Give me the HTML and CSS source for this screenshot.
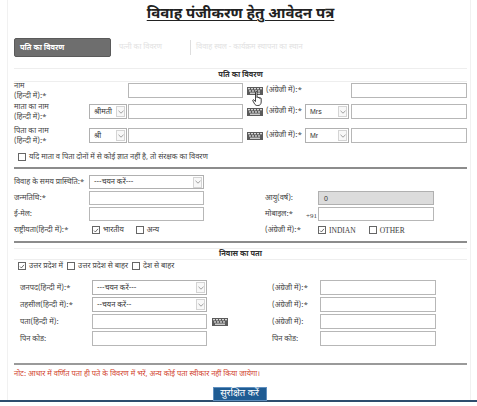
FILE: index.html
```html
<!DOCTYPE html>
<html lang="hi">
<head>
<meta charset="utf-8">
<title>विवाह पंजीकरण हेतु आवेदन पत्र</title>
<link rel="stylesheet" href="styles.css">
</head>
<body>
<div class="frame">
  <h1 class="title"><span>विवाह पंजीकरण हेतु आवेदन पत्र</span></h1>

  <div class="tabs">
    <div class="tab active">पति का विवरण</div>
    <div class="tab faded">पत्नी का विवरण</div>
    <div class="tab faded divider">विवाह स्थल - कार्यक्रम स्थापना का स्थान</div>
  </div>

  <div class="section-head">पति का विवरण</div>

  <div class="person-grid">
    <div class="lbl two">नाम<br>(हिन्दी में):*</div>
    <div class="input c3"></div>
    <div class="kbd-cell"><svg class="kbd" width="16" height="8" viewBox="0 0 16 8"><rect width="16" height="8" fill="#5b5b5b"/><g fill="#d8d8d8"><rect x="1" y="1" width="2" height="1.3"/><rect x="4" y="1" width="2" height="1.3"/><rect x="7" y="1" width="2" height="1.3"/><rect x="10" y="1" width="2" height="1.3"/><rect x="13" y="1" width="2" height="1.3"/><rect x="2" y="3.3" width="2" height="1.3"/><rect x="5" y="3.3" width="2" height="1.3"/><rect x="8" y="3.3" width="2" height="1.3"/><rect x="11" y="3.3" width="2" height="1.3"/><rect x="3" y="5.6" width="10" height="1.3"/></g></svg></div>
    <div class="lbl en">(अंग्रेजी में):*</div>
    <div class="input c7"></div>

    <div class="lbl two">माता का नाम<br>(हिन्दी में):*</div>
    <div class="select c2"><span>श्रीमती</span><i class="arrow"><svg width="6" height="4" viewBox="0 0 6 4"><path d="M.5 .8 3 3.2 5.5 .8" fill="none" stroke="#888" stroke-width=".8"/></svg></i></div>
    <div class="input c3"></div>
    <div class="kbd-cell"><svg class="kbd" width="16" height="8" viewBox="0 0 16 8"><rect width="16" height="8" fill="#5b5b5b"/><g fill="#d8d8d8"><rect x="1" y="1" width="2" height="1.3"/><rect x="4" y="1" width="2" height="1.3"/><rect x="7" y="1" width="2" height="1.3"/><rect x="10" y="1" width="2" height="1.3"/><rect x="13" y="1" width="2" height="1.3"/><rect x="2" y="3.3" width="2" height="1.3"/><rect x="5" y="3.3" width="2" height="1.3"/><rect x="8" y="3.3" width="2" height="1.3"/><rect x="11" y="3.3" width="2" height="1.3"/><rect x="3" y="5.6" width="10" height="1.3"/></g></svg></div>
    <div class="lbl en">(अंग्रेजी में):*</div>
    <div class="select c6 latin"><span>Mrs</span><i class="arrow"><svg width="6" height="4" viewBox="0 0 6 4"><path d="M.5 .8 3 3.2 5.5 .8" fill="none" stroke="#888" stroke-width=".8"/></svg></i></div>
    <div class="input c7"></div>

    <div class="lbl two">पिता का नाम<br>(हिन्दी में):*</div>
    <div class="select c2"><span>श्री</span><i class="arrow"><svg width="6" height="4" viewBox="0 0 6 4"><path d="M.5 .8 3 3.2 5.5 .8" fill="none" stroke="#888" stroke-width=".8"/></svg></i></div>
    <div class="input c3"></div>
    <div class="kbd-cell"><svg class="kbd" width="16" height="8" viewBox="0 0 16 8"><rect width="16" height="8" fill="#5b5b5b"/><g fill="#d8d8d8"><rect x="1" y="1" width="2" height="1.3"/><rect x="4" y="1" width="2" height="1.3"/><rect x="7" y="1" width="2" height="1.3"/><rect x="10" y="1" width="2" height="1.3"/><rect x="13" y="1" width="2" height="1.3"/><rect x="2" y="3.3" width="2" height="1.3"/><rect x="5" y="3.3" width="2" height="1.3"/><rect x="8" y="3.3" width="2" height="1.3"/><rect x="11" y="3.3" width="2" height="1.3"/><rect x="3" y="5.6" width="10" height="1.3"/></g></svg></div>
    <div class="lbl en">(अंग्रेजी में):*</div>
    <div class="select c6 latin"><span>Mr</span><i class="arrow"><svg width="6" height="4" viewBox="0 0 6 4"><path d="M.5 .8 3 3.2 5.5 .8" fill="none" stroke="#888" stroke-width=".8"/></svg></i></div>
    <div class="input c7"></div>

    <svg class="cursor" width="12" height="15" viewBox="0 0 12 15"><path d="M3.5 1.2c0-.8 1.5-.8 1.5 0V6.5c0-.8 1.4-.8 1.4 0V7c0-.8 1.4-.8 1.4 0v.5c0-.8 1.4-.8 1.4 0V11c0 2-1.2 3.5-3.2 3.5H5.2c-1.2 0-2-.6-2.6-1.6L.8 9.8c-.4-.7.5-1.4 1.1-.8l1.6 1.5z" fill="#fff" stroke="#111" stroke-width=".8" stroke-linejoin="round"/></svg>
  </div>

  <div class="check-row guardian"><span class="cb"></span>यदि माता व पिता दोनों में से कोई ज्ञात नहीं है, तो संरक्षक का विवरण</div>

  <hr class="thick">

  <div class="status-grid">
    <div class="lbl">विवाह के समय प्रास्थिति:*</div>
    <div class="select s2"><span>---चयन करें---</span><i class="arrow"><svg width="6" height="4" viewBox="0 0 6 4"><path d="M.5 .8 3 3.2 5.5 .8" fill="none" stroke="#888" stroke-width=".8"/></svg></i></div>
    <div class="blank"></div>

    <div class="lbl">जन्मतिथि:*</div>
    <div class="input s2"></div>
    <div class="lbl s4">आयु(वर्ष):</div>
    <div class="input s5 disabled"><span>0</span></div>

    <div class="lbl">ई-मेल:</div>
    <div class="input s2"></div>
    <div class="lbl s4 mob"><span>मोबाइल:*</span><span class="code">+91</span></div>
    <div class="input s5"></div>

    <div class="lbl">राष्ट्रीयता(हिन्दी में):*</div>
    <div class="checks s2"><span class="opt"><span class="cb on"><svg width="7" height="7" viewBox="0 0 7 7"><path d="M1.2 3.6 2.8 5.2 5.8 1.6" fill="none" stroke="#444" stroke-width=".9"/></svg></span>भारतीय</span><span class="opt"><span class="cb"></span>अन्य</span></div>
    <div class="lbl s4">(अंग्रेजी में):*</div>
    <div class="checks s5 latin"><span class="opt"><span class="cb on"><svg width="7" height="7" viewBox="0 0 7 7"><path d="M1.2 3.6 2.8 5.2 5.8 1.6" fill="none" stroke="#444" stroke-width=".9"/></svg></span>INDIAN</span><span class="opt"><span class="cb"></span>OTHER</span></div>
  </div>

  <hr class="thick second">

  <div class="section-head res">निवास का पता</div>

  <div class="check-row res-checks">
    <span class="opt"><span class="cb on"><svg width="7" height="7" viewBox="0 0 7 7"><path d="M1.2 3.6 2.8 5.2 5.8 1.6" fill="none" stroke="#444" stroke-width=".9"/></svg></span>उत्तर प्रदेश में</span>
    <span class="opt"><span class="cb"></span>उत्तर प्रदेश से बाहर</span>
    <span class="opt"><span class="cb"></span>देश से बाहर</span>
  </div>

  <div class="res-grid">
    <div class="lbl">जनपद(हिन्दी में):*</div>
    <div class="select"><span>---चयन करें---</span><i class="arrow"><svg width="6" height="4" viewBox="0 0 6 4"><path d="M.5 .8 3 3.2 5.5 .8" fill="none" stroke="#888" stroke-width=".8"/></svg></i></div>
    <div class="blank"></div>
    <div class="lbl">(अंग्रेजी में):*</div>
    <div class="input"></div>

    <div class="lbl">तहसील(हिन्दी में):*</div>
    <div class="select"><span>--चयन करें--</span><i class="arrow"><svg width="6" height="4" viewBox="0 0 6 4"><path d="M.5 .8 3 3.2 5.5 .8" fill="none" stroke="#888" stroke-width=".8"/></svg></i></div>
    <div class="blank"></div>
    <div class="lbl">(अंग्रेजी में):*</div>
    <div class="input"></div>

    <div class="lbl">पता(हिन्दी में):</div>
    <div class="input"></div>
    <div class="res-kbd"><svg class="kbd" width="16" height="8" viewBox="0 0 16 8"><rect width="16" height="8" fill="#5b5b5b"/><g fill="#d8d8d8"><rect x="1" y="1" width="2" height="1.3"/><rect x="4" y="1" width="2" height="1.3"/><rect x="7" y="1" width="2" height="1.3"/><rect x="10" y="1" width="2" height="1.3"/><rect x="13" y="1" width="2" height="1.3"/><rect x="2" y="3.3" width="2" height="1.3"/><rect x="5" y="3.3" width="2" height="1.3"/><rect x="8" y="3.3" width="2" height="1.3"/><rect x="11" y="3.3" width="2" height="1.3"/><rect x="3" y="5.6" width="10" height="1.3"/></g></svg></div>
    <div class="lbl">(अंग्रेजी में):</div>
    <div class="input"></div>

    <div class="lbl">पिन कोड:</div>
    <div class="input"></div>
    <div class="blank"></div>
    <div class="lbl">पिन कोड:</div>
    <div class="input"></div>
  </div>

  <hr class="thick note-line">

  <p class="note">नोट: आधार में वर्णित पता ही पते के विवरण में भरें, अन्य कोई पता स्वीकार नहीं किया जायेगा।</p>

  <div class="actions"><button class="save" type="button">सुरक्षित करें</button></div>
</div>
<div class="bottom-bar"></div>
</body>
</html>
```

FILE: styles.css
```css
* { box-sizing: border-box; }

html, body {
  margin: 0;
  padding: 0;
  background: #ffffff;
}

body {
  width: 477px;
  height: 406px;
  overflow: hidden;
  font-family: "Noto Sans Devanagari", "Noto Sans", "Liberation Sans", sans-serif;
  font-size: 7.5px;
  color: #3a3a3a;
}

.frame {
  width: 464px;
  height: 400px;
  margin-left: 7px;
  padding: 0 3px 0 6px;
  border-left: 1px solid #f1f1f1;
  border-right: 1px solid #f1f1f1;
}

.title {
  margin: 0;
  height: 30px;
  line-height: 30px;
  text-align: center;
  font-size: 15px;
  font-weight: bold;
  color: #222;
}

.title span {
  text-decoration: underline;
  text-decoration-thickness: 1px;
  text-underline-offset: 2px;
}

.tabs {
  margin-top: 8px;
  height: 19px;
  display: flex;
  align-items: center;
}

.tab {
  height: 19px;
  line-height: 19px;
  font-size: 7.5px;
  white-space: nowrap;
}

.tab.active {
  width: 97px;
  padding-left: 5px;
  background: #6e6e6e;
  border: 1px solid #5a5a5a;
  border-radius: 2px;
  color: #fff;
  font-weight: bold;
}

.tab.faded {
  color: #e2e2e2;
  padding-left: 8px;
}

.tab.divider {
  margin-left: 28px;
  padding-left: 5px;
  border-left: 1px solid #dedede;
  line-height: 15px;
  height: 15px;
}

.section-head {
  margin-top: 11px;
  height: 14px;
  line-height: 13px;
  text-align: center;
  font-weight: bold;
  color: #333;
  border-top: 1px solid #eeeeee;
  border-bottom: 1px solid #eeeeee;
}

.person-grid {
  position: relative;
  margin-top: 1px;
  display: grid;
  grid-template-columns: 75px 39px 117px 21px 39px 46px 116px;
  grid-template-rows: 21px 24px 21px;
  align-items: start;
}

.lbl {
  white-space: nowrap;
  color: #444;
  font-size: 7.5px;
}

.person-grid .lbl.two {
  grid-column: 1;
  line-height: 9.5px;
  margin-top: -1px;
}

.person-grid .lbl.en {
  grid-column: 5;
  line-height: 15px;
}

.person-grid .c2 { grid-column: 2; width: 38px; }
.person-grid .c3 { grid-column: 3; width: 115px; }
.person-grid .c6 { grid-column: 6; width: 44px; }
.person-grid .c7 { grid-column: 7; width: 116px; }

.kbd-cell {
  grid-column: 4;
  height: 15px;
  display: flex;
  align-items: center;
  padding-left: 2px;
}

.kbd { display: block; }

.input {
  height: 15px;
  border: 1px solid #b7b7b7;
  background: #fff;
}

.input.disabled {
  background: #dcdcdc;
  border-color: #b0b0b0;
  padding-left: 5px;
  line-height: 13px;
  font-family: "Liberation Sans", sans-serif;
  font-size: 7px;
  color: #333;
}

.select {
  height: 15px;
  border: 1px solid #b0b0b0;
  background: #fff;
  display: flex;
  align-items: center;
  justify-content: space-between;
  padding-left: 4px;
  font-size: 7.5px;
  color: #333;
  white-space: nowrap;
}

.select.latin span {
  font-family: "Liberation Sans", sans-serif;
  font-size: 7px;
}

.arrow {
  width: 9px;
  height: 11px;
  margin-right: 1px;
  border: 1px solid #d4d4d4;
  display: flex;
  align-items: center;
  justify-content: center;
  background: #f8f8f8;
}

.arrow svg { display: block; }

.cursor {
  position: absolute;
  left: 238px;
  top: 8px;
}

.cb {
  display: inline-flex;
  align-items: center;
  justify-content: center;
  width: 8px;
  height: 8px;
  border: 1px solid #666;
  background: #fff;
  margin-right: 3px;
  vertical-align: middle;
  flex: none;
}

.cb svg { display: block; }

.check-row {
  display: flex;
  align-items: center;
  height: 12px;
  margin-top: 2px;
  padding-left: 4px;
  color: #444;
  white-space: nowrap;
}

.thick {
  margin: 4px 0 0 0;
  border: 0;
  height: 2px;
  background: #8c8c8c;
}

.status-grid {
  margin-top: 6px;
  display: grid;
  grid-template-columns: 75px 115px 61px 53px 116px;
  grid-auto-rows: 14px;
  row-gap: 2px;
  align-items: center;
}

.status-grid .lbl { grid-column: 1; }
.status-grid .s2 { grid-column: 2; }
.status-grid .s4 { grid-column: 4; }
.status-grid .s5 { grid-column: 5; }
.status-grid .blank { grid-column: 3 / 6; }
.status-grid .input { height: 14px; }
.status-grid .select { height: 14px; }

.mob {
  display: flex;
  justify-content: space-between;
  padding-right: 1px;
}

.code {
  font-family: "Liberation Serif", serif;
  font-size: 7px;
  align-self: flex-end;
  margin-bottom: -1px;
}

.checks {
  display: flex;
  align-items: center;
  padding-left: 3px;
  white-space: nowrap;
}

.opt {
  display: inline-flex;
  align-items: center;
  margin-right: 12px;
}

.checks.latin {
  font-family: "Liberation Serif", serif;
  font-size: 7.5px;
  padding-left: 0;
}

.checks.latin .opt { margin-right: 13px; }

.thick.second { margin-top: 4px; }

.section-head.res {
  margin-top: 5px;
  height: 12px;
  line-height: 11px;
}

.res-checks {
  margin-top: 0;
  height: 12px;
}

.res-checks .opt { margin-right: 4px; }

.res-grid {
  margin-top: 8px;
  padding-left: 6px;
  display: grid;
  grid-template-columns: 72px 115px 65px 48px 116px;
  grid-auto-rows: 15px;
  row-gap: 2px;
  align-items: center;
}

.res-grid .input, .res-grid .select { height: 15px; }

.res-kbd {
  height: 15px;
  display: flex;
  align-items: center;
  padding-left: 5px;
}

.thick.note-line {
  margin-top: 17px;
  height: 2px;
  background: #9a9a9a;
}

.note {
  margin: 2px 0 0 0;
  height: 15px;
  line-height: 15px;
  color: #d2462f;
  font-size: 7.5px;
  white-space: nowrap;
}

.actions {
  margin-top: 5px;
  display: flex;
  justify-content: center;
}

.save {
  margin-left: -2px;
  width: 54px;
  height: 14px;
  padding: 0;
  border: 1px solid #5f8fbf;
  background: #1f5c93;
  color: #fff;
  font-family: inherit;
  font-size: 9.5px;
  line-height: 12px;
}

.bottom-bar {
  height: 2px;
  background: #2e4d6e;
}
```
